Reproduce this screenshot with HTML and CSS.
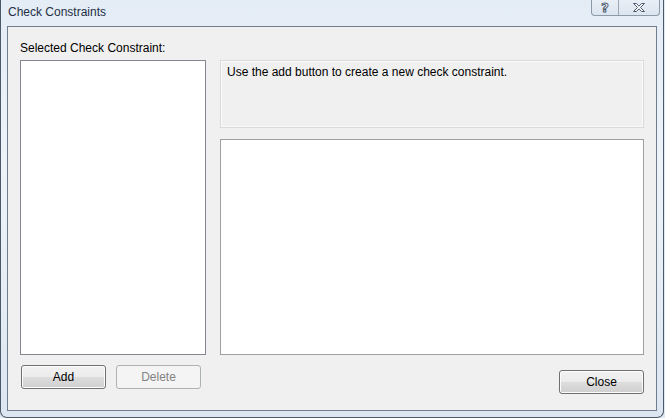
FILE: index.html
```html
<!DOCTYPE html>
<html lang="en">
<head>
    <meta charset="UTF-8">
    <title>Check Constraints</title>
    <link rel="stylesheet" href="styles.css">
</head>
<body>
    <div class="window">
        <div class="titlebar">
            <span class="title">Check Constraints</span>
            <div class="caption-buttons">
                <div class="cap-btn help">?</div>
                <div class="cap-btn close">
                    <svg width="16" height="11" viewBox="0 0 16 11">
                        <path d="M2.5 1.5h3l2.5 2.7 2.5-2.7h3l-4 4 4 4h-3l-2.5-2.7-2.5 2.7h-3l4-4z" fill="#fff" stroke="#4a5a6e" stroke-width="1"/>
                    </svg>
                </div>
            </div>
        </div>
        <div class="client">
            <div class="label">Selected Check Constraint:</div>
            <div class="panes">
                <div class="left-pane">
                    <div class="listbox"></div>
                    <div class="button-row">
                        <button class="btn">Add</button>
                        <button class="btn" disabled>Delete</button>
                    </div>
                </div>
                <div class="right-pane">
                    <div class="info">Use the add button to create a new check constraint.</div>
                    <div class="editor"></div>
                    <div class="close-row">
                        <button class="btn">Close</button>
                    </div>
                </div>
            </div>
        </div>
    </div>
</body>
</html>
```

FILE: styles.css
```css
body {
    margin: 0;
    padding: 0;
    font-family: "Liberation Sans", Arial, sans-serif;
    font-size: 12px;
    background-color: #dfe8f3;
}
.window {
    width: 664px;
    height: 418px;
    position: relative;
    overflow: hidden;
    background: linear-gradient(to bottom, #e4ecf6 0%, #eef3f9 40%, #dce6f1 100%);
    box-sizing: border-box;
    padding-left: 6px;
    border: 1px solid #4b5868;
    border-top: none;
    border-radius: 0 0 7px 7px;
}
.titlebar {
    height: 26px;
}
.title {
    display: inline-block;
    padding-left: 1px;
    padding-top: 5px;
    color: #1e2f47;
    font-size: 12px;
}
.caption-buttons {
    position: absolute;
    top: 0;
    left: 590px;
    display: flex;
    height: 15px;
    border: 1px solid #8c99a8;
    border-top: none;
    border-radius: 0 0 4px 4px;
    background: linear-gradient(to bottom, #e9eff6, #dbe4ef);
    overflow: hidden;
}
.cap-btn {
    height: 15px;
    display: flex;
    align-items: center;
    justify-content: center;
}
.cap-btn.help {
    width: 26px;
    border-right: 1px solid #9aa6b4;
    font-family: "DejaVu Sans", sans-serif;
    font-size: 13px;
    font-weight: bold;
    color: #fff;
    -webkit-text-stroke: 1px #4a5a6e;
}
.cap-btn.close {
    width: 40px;
}
.client {
    width: 650px;
    height: 385px;
    box-sizing: border-box;
    border: 1px solid #6f7d8e;
    background-color: #f0f0f0;
    padding: 14px 12px 0 12px;
    color: #000;
}
.label {
    line-height: 15px;
    height: 15px;
    margin-bottom: 4px;
}
.panes {
    display: flex;
    gap: 14px;
}
.left-pane {
    width: 186px;
}
.listbox {
    height: 295px;
    box-sizing: border-box;
    border: 1px solid #828790;
    background-color: #fff;
}
.button-row {
    display: flex;
    gap: 10px;
    margin-top: 10px;
    padding-left: 1px;
}
.btn {
    width: 85px;
    height: 24px;
    font-family: "Liberation Sans", Arial, sans-serif;
    font-size: 12px;
    color: #000;
    border: 1px solid #707070;
    border-radius: 3px;
    background: linear-gradient(to bottom, #f2f2f2 0%, #ebebeb 48%, #dddddd 52%, #cfcfcf 100%);
    box-shadow: inset 0 0 0 1px #fcfcfc;
    padding: 0;
}
.btn:disabled {
    color: #838383;
    border-color: #adb2b5;
    background: #f4f4f4;
    box-shadow: none;
}
.right-pane {
    width: 424px;
}
.info {
    height: 68px;
    box-sizing: border-box;
    border: 1px solid #dadada;
    box-shadow: inset 0 0 0 1px #fbfbfb;
    background-color: #f0f0f0;
    padding: 4px 6px;
    line-height: 15px;
}
.editor {
    height: 216px;
    margin-top: 11px;
    box-sizing: border-box;
    border: 1px solid #a0a0a0;
    background-color: #fff;
}
.close-row {
    display: flex;
    justify-content: flex-end;
    margin-top: 15px;
}
```
